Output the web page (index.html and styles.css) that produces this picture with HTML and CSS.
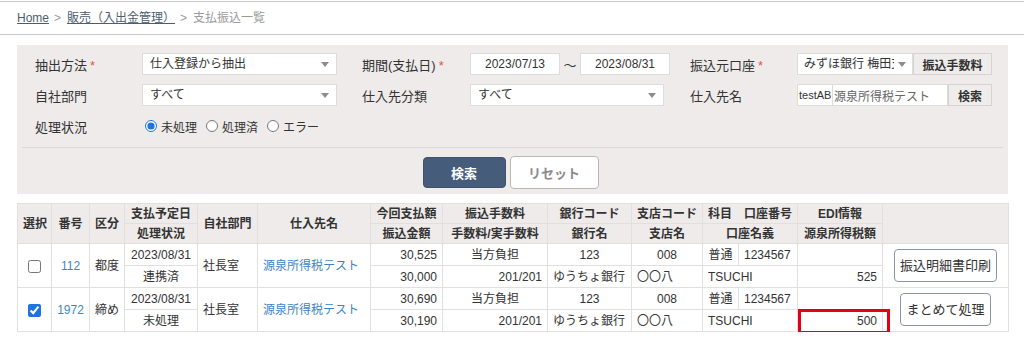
FILE: index.html
```html
<!DOCTYPE html>
<html lang="ja">
<head>
  <meta charset="UTF-8" />
  <title>支払振込一覧</title>
  <meta name="viewport" content="width=device-width, initial-scale=1.0" />
  <link rel="stylesheet" href="styles.css">
</head>
<body>

<!-- パンくず -->
<div class="breadcrumb">
  <a href="#">Home</a><span class="sep">&gt;</span><a href="#">販売（入出金管理）</a><span class="sep">&gt;</span><span>支払振込一覧</span>
</div>

<div class="page">

  <!-- 検索条件 -->
  <div class="search-panel">
    <div class="search-grid">
      <div class="label">抽出方法<span class="req">*</span></div>
      <div class="select w195">
        <select><option>仕入登録から抽出</option></select>
      </div>

      <div class="label">期間(支払日)<span class="req">*</span></div>
      <div class="range">
        <input class="date" type="text" value="2023/07/13" />
        <span class="tilde">〜</span>
        <input class="date" type="text" value="2023/08/31" />
      </div>

      <div class="label">振込元口座<span class="req">*</span></div>
      <div class="combo">
        <div class="select bank">
          <select><option>みずほ銀行 梅田支店</option></select>
        </div>
        <button class="btn-sub fee">振込手数料</button>
      </div>

      <div class="label">自社部門</div>
      <div class="select w195">
        <select><option>すべて</option></select>
      </div>

      <div class="label">仕入先分類</div>
      <div class="select w194">
        <select><option>すべて</option></select>
      </div>

      <div class="label">仕入先名</div>
      <div class="combo">
        <input class="code" type="text" value="testAB" />
        <input class="name" type="text" value="源泉所得税テスト" />
        <button class="btn-sub find">検索</button>
      </div>

      <div class="label">処理状況</div>
      <div class="radios">
        <label><input type="radio" name="status" checked />未処理</label>
        <label><input type="radio" name="status" />処理済</label>
        <label><input type="radio" name="status" />エラー</label>
      </div>
    </div>

    <div class="search-actions">
      <button class="btn-search">検索</button>
      <button class="btn-reset">リセット</button>
    </div>
  </div>

  <!-- 一覧 -->
  <table class="list">
    <colgroup>
      <col style="width:34px"><col style="width:38px"><col style="width:35px"><col style="width:73px">
      <col style="width:60px"><col style="width:113px"><col style="width:72px"><col style="width:105px">
      <col style="width:84px"><col style="width:71px"><col style="width:36px"><col style="width:59px">
      <col style="width:85px"><col style="width:126px">
    </colgroup>
    <thead>
      <tr>
        <th rowspan="2">選択</th>
        <th rowspan="2">番号</th>
        <th rowspan="2">区分</th>
        <th>支払予定日</th>
        <th rowspan="2">自社部門</th>
        <th rowspan="2">仕入先名</th>
        <th>今回支払額</th>
        <th>振込手数料</th>
        <th>銀行コード</th>
        <th>支店コード</th>
        <th colspan="2"><span class="kamoku">科目</span>口座番号</th>
        <th>EDI情報</th>
        <th rowspan="2"></th>
      </tr>
      <tr>
        <th>処理状況</th>
        <th>振込金額</th>
        <th>手数料/実手数料</th>
        <th>銀行名</th>
        <th>支店名</th>
        <th colspan="2">口座名義</th>
        <th>源泉所得税額</th>
      </tr>
    </thead>
    <tbody>
      <tr>
        <td rowspan="2" class="c"><input type="checkbox" /></td>
        <td rowspan="2" class="c"><a href="#">112</a></td>
        <td rowspan="2" class="c">都度</td>
        <td class="c">2023/08/31</td>
        <td rowspan="2">社長室</td>
        <td rowspan="2"><a href="#">源泉所得税テスト</a></td>
        <td class="r">30,525</td>
        <td class="c">当方負担</td>
        <td class="c">123</td>
        <td class="c">008</td>
        <td class="c">普通</td>
        <td>1234567</td>
        <td></td>
        <td rowspan="2" class="c"><button class="btn-row">振込明細書印刷</button></td>
      </tr>
      <tr>
        <td class="c">連携済</td>
        <td class="r">30,000</td>
        <td class="r">201/201</td>
        <td>ゆうちょ銀行</td>
        <td>〇〇八</td>
        <td colspan="2">TSUCHI</td>
        <td class="r">525</td>
      </tr>
      <tr>
        <td rowspan="2" class="c"><input type="checkbox" checked /></td>
        <td rowspan="2" class="c"><a href="#">1972</a></td>
        <td rowspan="2" class="c">締め</td>
        <td class="c">2023/08/31</td>
        <td rowspan="2">社長室</td>
        <td rowspan="2"><a href="#">源泉所得税テスト</a></td>
        <td class="r">30,690</td>
        <td class="c">当方負担</td>
        <td class="c">123</td>
        <td class="c">008</td>
        <td class="c">普通</td>
        <td>1234567</td>
        <td></td>
        <td rowspan="2" class="c"><button class="btn-row">まとめて処理</button></td>
      </tr>
      <tr>
        <td class="c">未処理</td>
        <td class="r">30,190</td>
        <td class="r">201/201</td>
        <td>ゆうちょ銀行</td>
        <td>〇〇八</td>
        <td colspan="2">TSUCHI</td>
        <td class="r marked">500<span class="mark"></span></td>
      </tr>
    </tbody>
  </table>

</div>

</body>
</html>
```

FILE: styles.css
```css
* { box-sizing: border-box; }
body {
  margin: 0;
  font-family: "Liberation Sans", "Noto Sans CJK JP", sans-serif;
  font-size: 12px;
  color: #333;
  background: #fff;
}
a { color: #3d85c6; text-decoration: none; }
input, select, button { font: inherit; color: inherit; margin: 0; }

/* breadcrumb */
.breadcrumb {
  margin-top: 1px;
  height: 34px;
  padding-left: 17px;
  line-height: 32px;
  border-top: 1px solid #c9c9c9;
  border-bottom: 1px solid #c9c9c9;
  color: #9a9a9a;
}
.breadcrumb a { color: #4b5d70; text-decoration: underline; }
.breadcrumb .sep { margin: 0 6px 0 5px; }

.page { padding: 10px 16px 0 17px; }

/* search panel */
.search-panel { background: #eeebea; }
.search-grid {
  display: grid;
  grid-template-columns: 107px 220px 108px 220px 107px 195px;
  grid-auto-rows: 22px;
  row-gap: 9px;
  align-items: center;
  padding: 8px 18px 10px;
}
.label { font-size: 13px; }
.req { color: #e5534b; margin-left: 3px; }

.select { position: relative; height: 22px; }
.select select {
  appearance: none;
  width: 100%;
  height: 100%;
  border: 1px solid #dcdcdc;
  border-radius: 0;
  background: #fff;
  padding: 0 18px 0 7px;
}
.select::after {
  content: "";
  position: absolute;
  right: 8px;
  top: 9px;
  border-left: 4px solid transparent;
  border-right: 4px solid transparent;
  border-top: 5px solid #8c8c8c;
  pointer-events: none;
}
.w195 { width: 195px; }
.w194 { width: 194px; }
.bank { width: 116px; }
.bank select { padding-left: 6px; }
.bank::after { right: 7px; }

.range { display: flex; align-items: center; height: 22px; }
.date {
  width: 90px;
  height: 22px;
  border: 1px solid #dcdcdc;
  text-align: center;
  padding: 0;
  background: #fff;
}
.tilde { width: 20px; text-align: center; font-size: 13px; }

.combo { display: flex; height: 22px; }
.combo input {
  height: 22px;
  border: 1px solid #dcdcdc;
  background: #fff;
  padding: 0 1px;
}
.combo .code { width: 36px; font-size: 11px; }
.combo .name { width: 115px; border-left: none; color: #666; }
.btn-sub {
  height: 22px;
  border: 1px solid #d6d3d2;
  background: #efedec;
  font-weight: bold;
  padding: 0;
  border-radius: 0;
}
.btn-sub.fee { width: 79px; }
.btn-sub.find { width: 44px; }

.radios { grid-column: 2 / -1; display: flex; align-items: center; padding-left: 3px; }
.radios label { display: flex; align-items: center; margin-right: 9px; }
.radios input {
  width: 12px;
  height: 12px;
  margin: 0 4px 0 0;
  accent-color: #1f74db;
}

.search-actions {
  margin: 0 5px;
  padding: 8px 4px 5px 0;
  border-top: 1px solid #dcd8d6;
  display: flex;
  justify-content: center;
  align-items: center;
  gap: 4px;
}
.btn-search {
  width: 83px;
  height: 31px;
  background: #455d7a;
  border: 1px solid #3c526d;
  border-radius: 4px;
  color: #fff;
  font-weight: bold;
  font-size: 13px;
}
.btn-reset {
  width: 89px;
  height: 33px;
  background: #fff;
  border: 1px solid #b8b8b8;
  border-radius: 4px;
  color: #8a8a8a;
  font-weight: bold;
  font-size: 13px;
}

/* list table */
.list {
  width: 991px;
  margin-top: 9px;
  border-collapse: collapse;
  table-layout: fixed;
}
.list th, .list td {
  border: 1px solid #e2dfde;
  padding: 0 5px;
  line-height: 16px;
  white-space: nowrap;
}
.list th {
  height: 20px;
  background: #eeebea;
  font-weight: bold;
  text-align: center;
}
.list td { height: 22px; }
.list .c { text-align: center; }
.list .r { text-align: right; }
.kamoku { margin-right: 12px; }
.list input[type="checkbox"] {
  width: 13px;
  height: 13px;
  margin: 0;
  vertical-align: middle;
  accent-color: #1f74db;
}

.btn-row {
  height: 33px;
  padding: 0 5px;
  background: #fff;
  border: 1px solid #8897aa;
  border-radius: 4px;
  font-size: 13px;
}

.marked { position: relative; }
.mark {
  position: absolute;
  left: 0;
  top: -1px;
  width: 92px;
  height: 25px;
  border: 3px solid #e60012;
}
```
